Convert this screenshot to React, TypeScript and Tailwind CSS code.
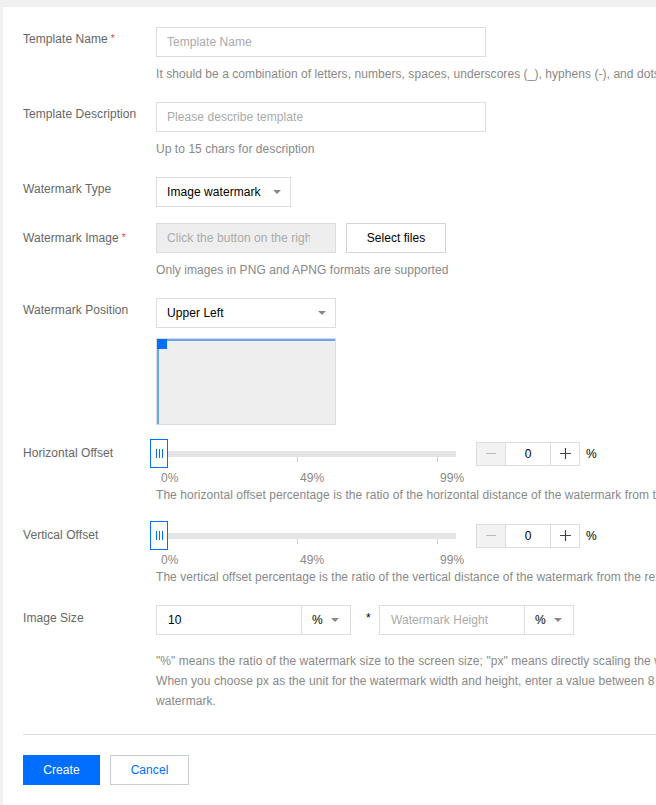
import React from 'react'

const FONT = "font-['Liberation_Sans',Arial,Helvetica,sans-serif]"

function Label({ text, required, pt = 'pt-[3px]' }: { text: string; required?: boolean; pt?: string }) {
  return (
    <div className={`w-[133px] shrink-0 ${pt} leading-[18px] text-[#666]`}>
      {text}
      {required && <span className="ml-[3px] relative -top-[1px] text-[10px] text-[#e54545]">*</span>}
    </div>
  )
}

function Help({ children, className = '' }: { children: React.ReactNode; className?: string }) {
  return <div className={`whitespace-nowrap leading-[18px] text-[#888] ${className}`}>{children}</div>
}

function Caret() {
  return (
    <svg width="8" height="4" viewBox="0 0 8 4" className="shrink-0">
      <path d="M0 0h8L4 4z" fill="#888" />
    </svg>
  )
}

function Select({ value, width }: { value: string; width: string }) {
  return (
    <div className={`${width} h-[30px] border border-[#ddd] bg-white flex items-center justify-between pl-[10px] pr-[9px]`}>
      <span className="text-black">{value}</span>
      <Caret />
    </div>
  )
}

function TextInput({ placeholder }: { placeholder: string }) {
  return (
    <div className="w-[330px] h-[30px] border border-[#ddd] bg-white flex items-center px-[10px] text-[#aaa]">
      {placeholder}
    </div>
  )
}

function Slider() {
  return (
    <div className="relative ml-[-6px] w-[306px] h-[29px] shrink-0">
      <div className="absolute left-[9px] right-0 top-[12px] h-[6px] bg-[#e5e5e5]" />
      <div className="absolute left-[147px] top-[18px] w-px h-[5px] bg-[#ccc]" />
      <div className="absolute left-[287px] top-[18px] w-px h-[5px] bg-[#ccc]" />
      <div className="absolute left-0 top-0 w-[18px] h-[29px] border border-[#006eff] bg-white flex items-center justify-center gap-[2px]">
        <span className="w-px h-[9px] bg-[#006eff]" />
        <span className="w-px h-[9px] bg-[#006eff]" />
        <span className="w-px h-[9px] bg-[#006eff]" />
      </div>
    </div>
  )
}

function Stepper() {
  return (
    <div className="ml-[20px] flex h-[24px] border border-[#ddd]">
      <div className="w-[29px] bg-[#f2f2f2] flex items-center justify-center border-r border-[#ddd]">
        <span className="w-[10px] h-px bg-[#bbb]" />
      </div>
      <div className="w-[44px] flex items-center justify-center text-black">0</div>
      <div className="w-[29px] flex items-center justify-center border-l border-[#ddd]">
        <svg width="11" height="11" viewBox="0 0 11 11">
          <path d="M5.5 0v11M0 5.5h11" stroke="#444" strokeWidth="1.2" />
        </svg>
      </div>
    </div>
  )
}

function OffsetRow({ label, help, mb }: { label: string; help: string; mb: string }) {
  return (
    <div className={`flex ${mb}`}>
      <Label text={label} pt="pt-[5px]" />
      <div className="min-w-0">
        <div className="flex items-center">
          <Slider />
          <Stepper />
          <span className="ml-[6px] text-black">%</span>
        </div>
        <div className="relative ml-[-6px] w-[306px] h-[18px] leading-[20px] text-[#888]">
          <span className="absolute left-[11px]">0%</span>
          <span className="absolute left-[150px]">49%</span>
          <span className="absolute left-[290px]">99%</span>
        </div>
        <Help>{help}</Help>
      </div>
    </div>
  )
}

function SizeInput({ value, placeholder }: { value?: string; placeholder?: string }) {
  return (
    <div className="flex h-[30px] border border-[#ddd] bg-white">
      <div className={`w-[145px] flex items-center px-[11px] border-r border-[#ddd] ${value ? 'text-black' : 'text-[#aaa]'}`}>
        {value ?? placeholder}
      </div>
      <div className="w-[48px] flex items-center justify-between pl-[10px] pr-[11px]">
        <span className="text-black">%</span>
        <Caret />
      </div>
    </div>
  )
}

export default function App() {
  return (
    <div className={`w-[656px] h-[805px] overflow-hidden bg-[#f0f0f0] pt-[7px] pl-[3px] text-[12px] tracking-[0.06px] ${FONT}`}>
      <div className="w-[900px] h-[798px] bg-white pt-[20px] pl-[20px]">
        <div className="flex mb-[19px]">
          <Label text="Template Name" required />
          <div>
            <TextInput placeholder="Template Name" />
            <Help className="mt-[8px]">
              It should be a combination of letters, numbers, spaces, underscores (_), hyphens (-), and dots (.)
            </Help>
          </div>
        </div>

        <div className="flex mb-[19px]">
          <Label text="Template Description" />
          <div>
            <TextInput placeholder="Please describe template" />
            <Help className="mt-[8px]">Up to 15 chars for description</Help>
          </div>
        </div>

        <div className="flex mb-[16px]">
          <Label text="Watermark Type" />
          <Select value="Image watermark" width="w-[135px]" />
        </div>

        <div className="flex mb-[19px]">
          <Label text="Watermark Image" required pt="pt-[6px]" />
          <div>
            <div className="flex">
              <div className="w-[180px] h-[30px] border border-[#ddd] bg-[#eee] flex items-center pl-[10px] pr-[25px] text-[#aaa] overflow-hidden whitespace-nowrap">
                <span className="overflow-hidden">Click the button on the right to upload</span>
              </div>
              <button className="ml-[10px] w-[100px] h-[30px] border border-[#d5d5d5] bg-white text-black">Select files</button>
            </div>
            <Help className="mt-[8px]">Only images in PNG and APNG formats are supported</Help>
          </div>
        </div>

        <div className="flex mb-[14px]">
          <Label text="Watermark Position" />
          <div>
            <Select value="Upper Left" width="w-[180px]" />
            <div className="mt-[10px] w-[180px] h-[87px] border border-[#ddd] bg-[#eee]">
              <div className="relative h-full border-t-2 border-l-2 border-[#6aa6f8]">
                <div className="absolute -top-[2px] -left-[2px] w-[10px] h-[10px] bg-[#006eff]" />
              </div>
            </div>
          </div>
        </div>

        <OffsetRow
          label="Horizontal Offset"
          mb="mb-[17px]"
          help="The horizontal offset percentage is the ratio of the horizontal distance of the watermark from the reference position to the video width."
        />
        <OffsetRow
          label="Vertical Offset"
          mb="mb-[19px]"
          help="The vertical offset percentage is the ratio of the vertical distance of the watermark from the reference position to the video height."
        />

        <div className="flex">
          <Label text="Image Size" pt="pt-[4px]" />
          <div>
            <div className="flex items-center">
              <SizeInput value="10" />
              <span className="ml-[15px] w-[13px] relative -top-[2px] text-black">*</span>
              <SizeInput placeholder="Watermark Height" />
            </div>
            <div className="mt-[16px] leading-[20px] text-[#888] whitespace-nowrap">
              <div>"%" means the ratio of the watermark size to the screen size; "px" means directly scaling the watermark by pixels.</div>
              <div>When you choose px as the unit for the watermark width and height, enter a value between 8 and 4096 for the width or height of the</div>
              <div>watermark.</div>
            </div>
          </div>
        </div>

        <div className="mt-[23px] h-px bg-[#ddd]" />

        <div className="mt-[20px] flex">
          <button className="w-[77px] h-[30px] bg-[#006eff] text-white">Create</button>
          <button className="ml-[10px] w-[79px] h-[30px] border border-[#c7cdd9] bg-white text-[#006eff]">Cancel</button>
        </div>
      </div>
    </div>
  )
}
